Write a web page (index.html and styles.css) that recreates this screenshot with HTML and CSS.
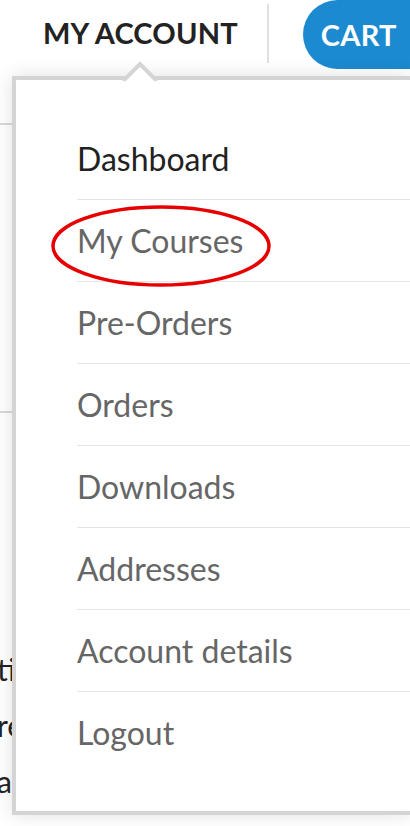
FILE: index.html
```html
<!DOCTYPE html>
<html lang="en">
<head>
  <meta charset="UTF-8" />
  <meta name="viewport" content="width=device-width, initial-scale=1.0" />
  <title>My Account</title>
  <link rel="stylesheet" href="styles.css">
</head>
<body>
  <div class="header">
    <a class="account-link" href="#">MY ACCOUNT</a>
    <span class="divider"></span>
    <a class="cart-btn" href="#">CART</a>
  </div>

  <div class="page">
    <div class="rule rule-top"></div>
    <div class="rule rule-mid"></div>
    <div class="page-text">
      <p>tion</p>
      <p>re</p>
      <p>as</p>
    </div>
  </div>

  <div class="dropdown">
    <svg class="caret" width="44" height="22" viewBox="0 0 44 22">
      <polyline points="3,22 20,5 37,22" fill="#fff" stroke="#d4d4d4" stroke-width="4" />
    </svg>
    <ul class="menu">
      <li class="active"><a href="#">Dashboard</a></li>
      <li><a href="#">My Courses</a></li>
      <li><a href="#">Pre-Orders</a></li>
      <li><a href="#">Orders</a></li>
      <li><a href="#">Downloads</a></li>
      <li><a href="#">Addresses</a></li>
      <li><a href="#">Account details</a></li>
      <li><a href="#">Logout</a></li>
    </ul>
    <svg class="highlight" width="224" height="86" viewBox="0 0 224 86">
      <ellipse cx="112" cy="43" rx="108" ry="39" fill="none" stroke="#e60000" stroke-width="3.5" />
    </svg>
  </div>
</body>
</html>
```

FILE: styles.css
```css
html {
  overflow: hidden;
}

body {
  font-family: Lato, "Open Sans", sans-serif;
  margin: 0;
  height: 826px;
  overflow: hidden;
  position: relative;
  background: #fff;
}

.header {
  display: flex;
  align-items: flex-start;
  height: 70px;
}

.account-link {
  flex-shrink: 0;
  margin: 15px 0 0 43px;
  font-size: 29px;
  font-weight: bold;
  color: #222;
  text-decoration: none;
  white-space: nowrap;
  letter-spacing: 0.2px;
}

.divider {
  flex-shrink: 0;
  width: 2px;
  height: 59px;
  margin: 4px 0 0 29px;
  background: #e0e0e0;
}

.cart-btn {
  flex-shrink: 0;
  margin-left: 34px;
  height: 69px;
  padding: 0 15px 0 18px;
  display: flex;
  align-items: center;
  background: #1b8ad0;
  color: #fff;
  font-size: 29px;
  font-weight: bold;
  text-decoration: none;
  border-radius: 35px 0 0 35px;
  letter-spacing: 0.3px;
}

.page {
  position: relative;
}

.rule {
  height: 2px;
  background: #d8d8d8;
  width: 60px;
}

.rule-top {
  margin-top: 53px;
}

.rule-mid {
  margin-top: 286px;
}

.page-text {
  margin-top: 238px;
  margin-left: -3px;
  font-size: 30px;
  color: #222;
}

.page-text p {
  margin: 0 0 20px 0;
  line-height: 36px;
}

.dropdown {
  position: absolute;
  left: 12px;
  right: 0;
  top: 76px;
  background: #fff;
  border: 4px solid #d4d4d4;
  border-right: none;
  box-shadow: 0 0 18px rgba(0, 0, 0, 0.12);
}

.caret {
  position: absolute;
  left: 104px;
  top: -21px;
}

.menu {
  list-style: none;
  margin: 0;
  padding: 38px 0 38px 61px;
}

.menu li {
  border-bottom: 1px solid #e4e4e4;
}

.menu li:last-child {
  border-bottom: none;
}

.menu a {
  display: block;
  height: 81px;
  line-height: 81px;
  font-size: 32px;
  color: #666;
  text-decoration: none;
}

.menu li.active a {
  color: #222;
}

.highlight {
  position: absolute;
  left: 33px;
  top: 123px;
}
```
